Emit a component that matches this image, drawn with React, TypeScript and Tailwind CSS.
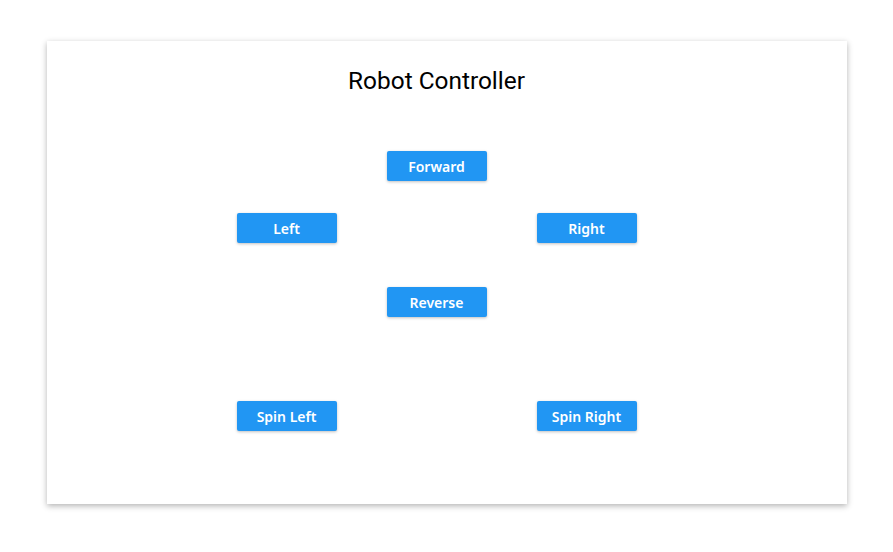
const Btn = ({ label }: { label: string }) => (
  <button
    className="w-[100px] h-[30px] bg-[#2196f3] text-white text-[14px] font-semibold rounded-[2px] shadow-[0_1px_3px_rgba(0,0,0,0.25)] flex items-center justify-center"
    style={{ fontFamily: '"Noto Sans", "Open Sans", sans-serif' }}
  >
    {label}
  </button>
)

const App = () => {
  return (
    <div className="w-[893px] h-[552px] bg-white pt-[41px] flex justify-center">
      <div className="w-[800px] h-[463px] bg-white shadow-[0_2px_6px_rgba(0,0,0,0.3)] flex flex-col items-center pr-[20px] pt-[24px]">
        <h1
          className="text-[24.4px] leading-[32px] text-black"
          style={{ fontFamily: 'Roboto, sans-serif' }}
        >
          Robot Controller
        </h1>
        <div className="grid grid-cols-[100px_100px_100px] gap-x-[50px] mt-[54px]">
          <div />
          <Btn label="Forward" />
          <div />
          <div className="mt-[32px]"><Btn label="Left" /></div>
          <div />
          <div className="mt-[32px]"><Btn label="Right" /></div>
          <div />
          <div className="mt-[44px]"><Btn label="Reverse" /></div>
          <div />
          <div className="mt-[84px]"><Btn label="Spin Left" /></div>
          <div />
          <div className="mt-[84px]"><Btn label="Spin Right" /></div>
        </div>
      </div>
    </div>
  )
}

export default App
